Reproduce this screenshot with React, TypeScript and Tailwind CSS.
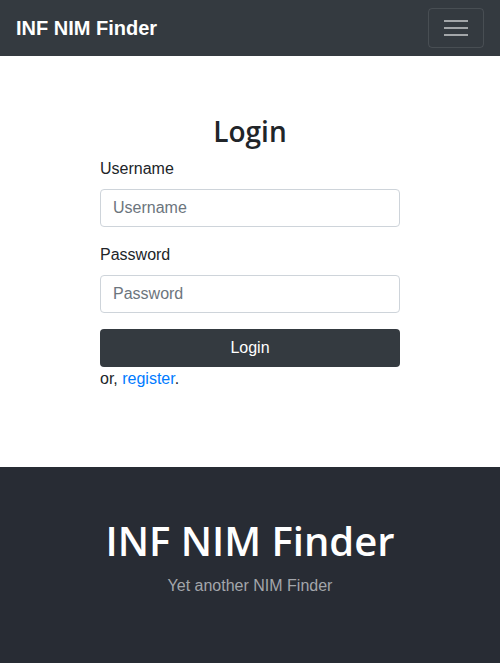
import React from 'react';

const sans = "font-['Liberation_Sans',Arial,sans-serif]";
const open = "font-['Open_Sans','Noto_Sans',sans-serif]";

const Field: React.FC<{ label: string; type?: string }> = ({ label, type = 'text' }) => (
    <div className="mb-4 flex flex-col">
        <label className="mb-2 text-base leading-6 text-[#212529]">{label}</label>
        <input
            type={type}
            placeholder={label}
            className="h-[38px] w-full rounded border border-[#ced4da] bg-white px-3 text-base text-[#495057] outline-none placeholder:text-[#6c757d]"
        />
    </div>
);

export default function App() {
    return (
        <div className={`${sans} min-h-[663px] bg-white`}>
            <nav className="flex h-14 items-center justify-between bg-[#343a40] px-4">
                <span className="text-xl font-bold text-white">INF NIM Finder</span>
                <button className="flex h-10 w-14 items-center justify-center rounded border border-white/10">
                    <svg width="24" height="24" viewBox="0 0 24 24">
                        <path d="M0 5h24M0 12h24M0 19h24" stroke="rgba(255,255,255,0.55)" strokeWidth="2" />
                    </svg>
                </button>
            </nav>

            <main className="flex justify-center pt-[57px] pb-[76px]">
                <div className="w-[300px]">
                    <h2 className={`${open} mb-[8px] text-center text-[28px] font-semibold leading-9 text-[#212529]`}>Login</h2>
                    <Field label="Username" />
                    <Field label="Password" type="password" />
                    <button className="h-[38px] w-full rounded bg-[#343a40] text-base text-white">Login</button>
                    <p className="text-base leading-6 text-[#212529]">
                        or, <a href="#" className="text-[#007bff]">register</a>.
                    </p>
                </div>
            </main>

            <footer className="flex h-[196px] flex-col items-center bg-[#282c34] pt-[49px]">
                <h1 className={`${open} text-[40px] font-semibold leading-[50px] text-white`}>INF NIM Finder</h1>
                <p className="mt-[8px] text-base leading-6 text-[#a3a6ab]">Yet another NIM Finder</p>
            </footer>
        </div>
    );
}
